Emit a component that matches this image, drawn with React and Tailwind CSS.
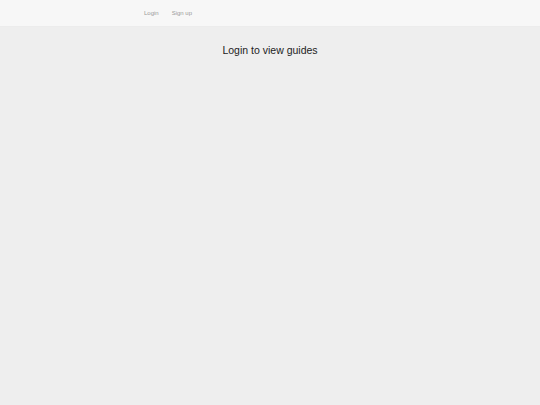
import React from "react";

const App = () => {
  return (
    <div
      className="min-h-[405px] bg-[#eeeeee]"
      style={{ fontFamily: '"Liberation Sans", Arial, sans-serif' }}
    >
      <nav className="h-[27px] bg-[#f7f7f7] border-b border-[#ececec] flex items-center pl-[144px] gap-[13px] text-[6px] text-[#9a9a9a]">
        <a href="#">Login</a>
        <a href="#">Sign up</a>
      </nav>
      <h2 className="text-center text-[10.5px] leading-[14px] text-[#222] mt-[16px]">
        Login to view guides
      </h2>
    </div>
  );
};

export default App;
